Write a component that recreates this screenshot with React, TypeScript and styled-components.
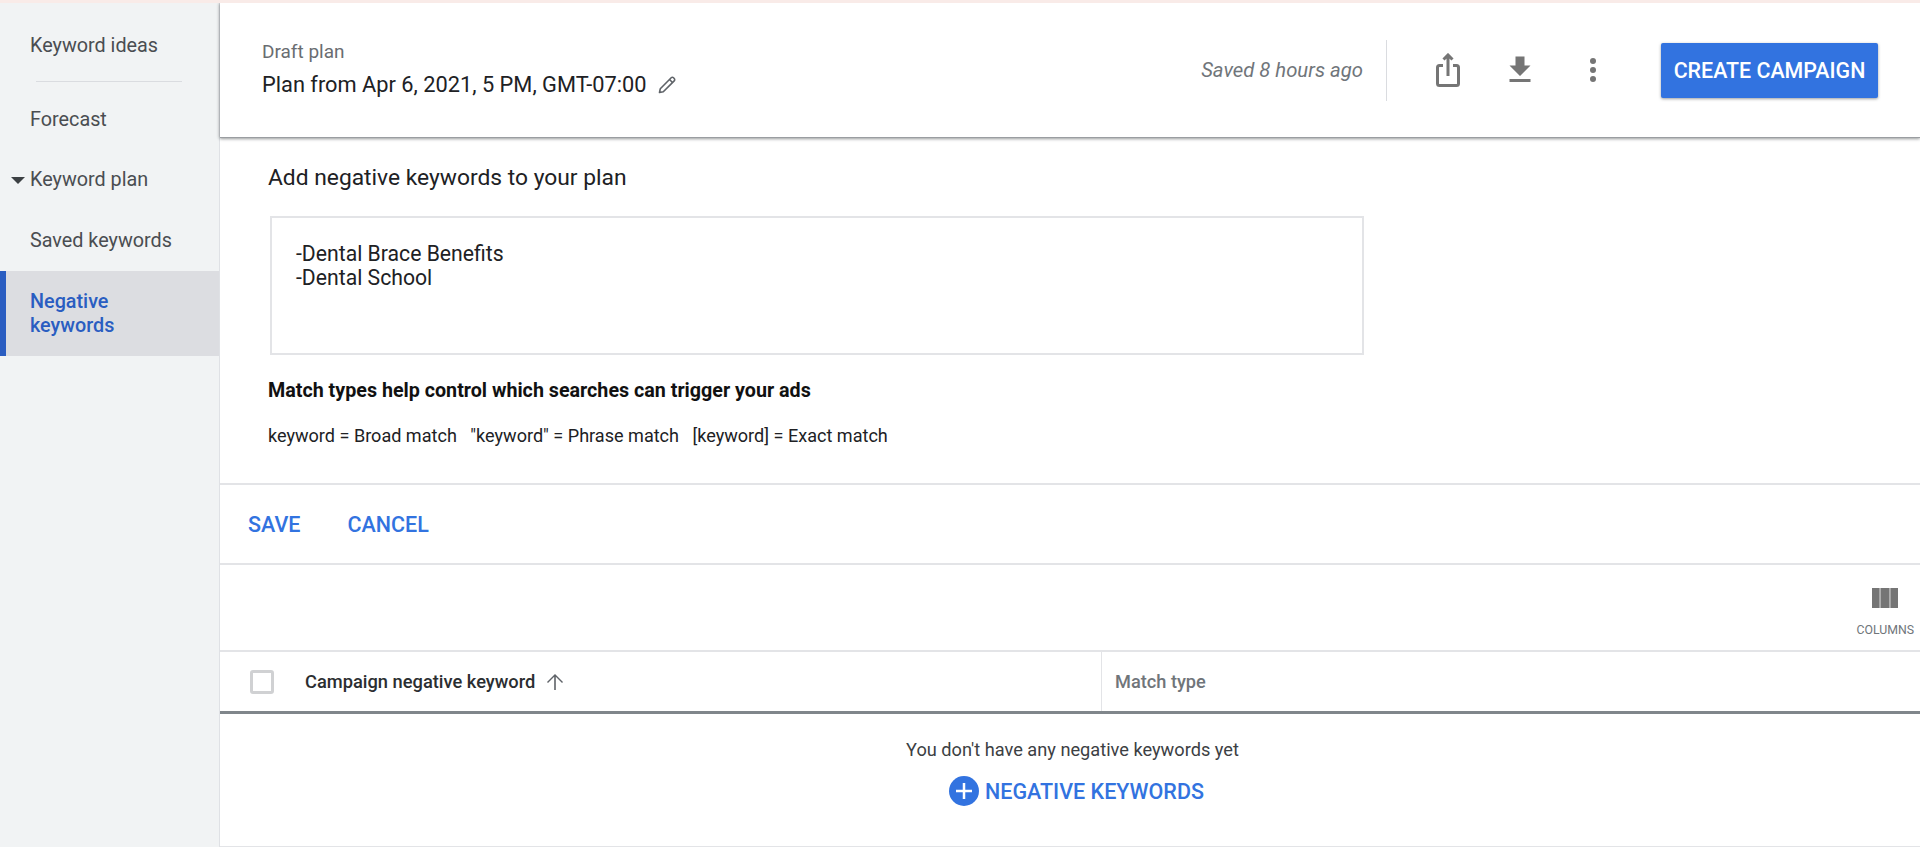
import React from "react";
import styled, { createGlobalStyle } from "styled-components";

const Global = createGlobalStyle`
  html, body { margin: 0; padding: 0; background: #fff; }
  body { font-family: Roboto, "Liberation Sans", sans-serif; overflow: hidden; }
  * { box-sizing: border-box; }
`;

const Page = styled.div`
  width: 1920px;
  height: 847px;
  display: flex;
  flex-direction: column;
  overflow: hidden;
`;
const TopStrip = styled.div`
  height: 3px;
  flex: none;
  background: #f9ebe8;
  position: relative;
  z-index: 2;
`;
const Body = styled.div`
  flex: 1;
  display: flex;
  min-height: 0;
`;
const Sidebar = styled.nav`
  width: 220px;
  flex: none;
  background: #f1f3f4;
  border-right: 1px solid #dfe1e5;
  padding-top: 25px;
`;
const NavItem = styled.div<{ $h: number; $mt?: number }>`
  height: ${(p) => p.$h}px;
  margin-top: ${(p) => p.$mt ?? 0}px;
  padding-left: 30px;
  display: flex;
  align-items: center;
  position: relative;
  font-size: 19.8px;
  line-height: 24px;
  color: #4a4d51;
`;
const ActiveItem = styled.div`
  height: 85px;
  padding: 19px 20px 0 24px;
  border-left: 6px solid #2a5dc1;
  background: #dcdde1;
  font-size: 19.8px;
  line-height: 24px;
  font-weight: 500;
  color: #2a5dc1;
`;
const Caret = styled.span`
  position: absolute;
  left: 11px;
  top: 50%;
  margin-top: -3px;
  width: 0;
  height: 0;
  border-left: 7px solid transparent;
  border-right: 7px solid transparent;
  border-top: 7px solid #3c4043;
`;
const NavDivider = styled.div`
  height: 1px;
  margin: 17px 37px 20px 36px;
  background: #dadce0;
`;
const Main = styled.main`
  flex: 1;
  min-width: 0;
  display: flex;
  flex-direction: column;
`;
const Header = styled.header`
  height: 135px;
  flex: none;
  background: #fff;
  display: flex;
  align-items: center;
  padding: 0 42px;
  border-bottom: 1px solid #9a9da1;
  box-shadow: 0 1px 3px rgba(60, 64, 67, 0.45), -1px 0 3px rgba(60, 64, 67, 0.2);
  position: relative;
  z-index: 1;
`;
const TitleBlock = styled.div`
  flex: 1;
  min-width: 0;
`;
const Eyebrow = styled.div`
  font-size: 19px;
  line-height: 20px;
  color: #6a6d71;
`;
const PlanRow = styled.div`
  margin-top: 10px;
  display: flex;
  align-items: center;
  gap: 8px;
  font-size: 21.8px;
  line-height: 26px;
  color: #202124;
`;
const Saved = styled.span`
  font-size: 20.3px;
  font-style: italic;
  color: #70757a;
`;
const VRule = styled.div`
  width: 1px;
  height: 61px;
  background: #dadce0;
  margin: 0 49px 0 23px;
`;
const IconSlot = styled.span<{ $mr: number }>`
  display: flex;
  align-items: center;
  margin-right: ${(p) => p.$mr}px;
`;
const Create = styled.div`
  width: 217px;
  height: 55px;
  background: #3273e0;
  border-radius: 2px;
  box-shadow: 0 1px 3px rgba(60, 64, 67, 0.5);
  color: #fff;
  font-size: 21.4px;
  font-weight: 500;
  display: flex;
  align-items: center;
  justify-content: center;
`;
const Editor = styled.section`
  height: 347px;
  flex: none;
  padding: 26px 49px 0 48px;
  border-bottom: 2px solid #e3e4e7;
`;
const EditorTitle = styled.div`
  font-size: 22.8px;
  line-height: 28px;
  color: #202124;
`;
const Box = styled.div`
  width: 1094px;
  height: 139px;
  margin: 24px 0 0 2px;
  padding: 24px 24px;
  border: 2px solid #e3e4e7;
  font-size: 21.2px;
  line-height: 24px;
  color: #202124;
`;
const Bold = styled.div`
  margin-top: 24px;
  font-size: 19.7px;
  line-height: 24px;
  font-weight: 700;
  color: #111;
`;
const Legend = styled.div`
  margin-top: 21px;
  font-size: 18.07px;
  line-height: 24px;
  color: #202124;
  white-space: pre;
`;
const Actions = styled.div`
  height: 80px;
  flex: none;
  display: flex;
  align-items: center;
  gap: 47px;
  padding-left: 28px;
  border-bottom: 2px solid #e3e4e7;
`;
const TextBtn = styled.span`
  font-size: 21.5px;
  font-weight: 500;
  color: #3273e0;
`;
const Tools = styled.div`
  height: 87px;
  flex: none;
  border-bottom: 2px solid #e3e4e7;
  display: flex;
  justify-content: flex-end;
  padding: 23px 6px 0 0;
`;
const ColumnsBtn = styled.div`
  display: flex;
  flex-direction: column;
  align-items: center;
  gap: 15px;
  font-size: 12.3px;
  line-height: 14px;
  color: #70757a;
`;
const TableHead = styled.div`
  height: 62px;
  flex: none;
  display: flex;
  border-bottom: 3px solid #80868b;
`;
const KeywordCol = styled.div`
  width: 882px;
  flex: none;
  display: flex;
  align-items: center;
  padding-left: 30px;
  border-right: 1px solid #e3e4e7;
`;
const Check = styled.span`
  width: 24px;
  height: 24px;
  border: 3px solid #d0d1d3;
  border-radius: 3px;
  margin-right: 31px;
`;
const ColLabel = styled.span`
  font-size: 18.3px;
  font-weight: 500;
  color: #2b2e31;
  margin-right: 8px;
`;
const TypeCol = styled.div`
  flex: 1;
  display: flex;
  align-items: center;
  padding-left: 13px;
  font-size: 18.2px;
  font-weight: 500;
  color: #70757a;
`;
const Empty = styled.div`
  flex: 1;
  display: flex;
  flex-direction: column;
  align-items: center;
  padding: 24px 0 0 5px;
  border-bottom: 1px solid #e3e4e7;
`;
const EmptyText = styled.div`
  font-size: 18.2px;
  line-height: 24px;
  color: #3c4043;
`;
const AddBtn = styled.div`
  margin: 14px 0 0 8px;
  display: flex;
  align-items: center;
  gap: 6px;
  font-size: 21.5px;
  font-weight: 500;
  color: #3273e0;
`;

export default function App() {
  return (
    <Page>
      <Global />
      <TopStrip />
      <Body>
        <Sidebar>
          <NavItem $h={36}>Keyword ideas</NavItem>
          <NavDivider />
          <NavItem $h={36}>Forecast</NavItem>
          <NavItem $h={60} $mt={12}>
            <Caret />
            Keyword plan
          </NavItem>
          <NavItem $h={61}>Saved keywords</NavItem>
          <ActiveItem>
            Negative
            <br />
            keywords
          </ActiveItem>
        </Sidebar>
        <Main>
          <Header>
            <TitleBlock>
              <Eyebrow>Draft plan</Eyebrow>
              <PlanRow>
                Plan from Apr 6, 2021, 5 PM, GMT-07:00
                <svg width="24" height="24" viewBox="0 0 24 24" fill="none" stroke="#5f6368" strokeWidth="1.6" strokeLinejoin="round">
                  <path d="M4.5 19.5l.8-3.8L16.2 4.8a1.6 1.6 0 0 1 2.3 0l.7.7a1.6 1.6 0 0 1 0 2.3L8.3 18.7z" />
                  <path d="M14.5 6.5l3 3" />
                </svg>
              </PlanRow>
            </TitleBlock>
            <Saved>Saved 8 hours ago</Saved>
            <VRule />
            <IconSlot $mr={42}>
              <svg width="24" height="34" viewBox="0 0 24 34" fill="none" stroke="#757575" strokeWidth="3">
                <path d="M7 12.5H3.5a2 2 0 0 0-2 2V30.5a2 2 0 0 0 2 2H20.5a2 2 0 0 0 2-2V14.5a2 2 0 0 0-2-2H17" />
                <path d="M12 3V23M7.5 6.5L12 2l4.5 4.5" />
              </svg>
            </IconSlot>
            <IconSlot $mr={51}>
              <svg width="36" height="36" viewBox="0 0 24 24" fill="#757575">
                <path d="M19 9h-4V3H9v6H5l7 7 7-7zM5 18v2h14v-2H5z" />
              </svg>
            </IconSlot>
            <IconSlot $mr={64}>
              <svg width="8" height="26" viewBox="0 0 8 26" fill="#757575">
                <circle cx="4" cy="4" r="3" />
                <circle cx="4" cy="13" r="3" />
                <circle cx="4" cy="22" r="3" />
              </svg>
            </IconSlot>
            <Create>CREATE CAMPAIGN</Create>
          </Header>
          <Editor>
            <EditorTitle>Add negative keywords to your plan</EditorTitle>
            <Box>
              -Dental Brace Benefits
              <br />
              -Dental School
            </Box>
            <Bold>Match types help control which searches can trigger your ads</Bold>
            <Legend>{'keyword = Broad match   "keyword" = Phrase match   [keyword] = Exact match'}</Legend>
          </Editor>
          <Actions>
            <TextBtn>SAVE</TextBtn>
            <TextBtn>CANCEL</TextBtn>
          </Actions>
          <Tools>
            <ColumnsBtn>
              <svg width="26" height="20" viewBox="4 5 17 13" preserveAspectRatio="none" fill="#757575">
                <path d="M9.5 18h6V5h-6v13zm-5.5 0h5V5H4v13zM16 5v13h5V5h-5z" />
              </svg>
              COLUMNS
            </ColumnsBtn>
          </Tools>
          <TableHead>
            <KeywordCol>
              <Check />
              <ColLabel>Campaign negative keyword</ColLabel>
              <svg width="24" height="24" viewBox="0 0 24 24" fill="#5f6368">
                <path d="M4 12l1 1 6.2-6.2V20h1.6V6.8L19 13l1-1-8-8-8 8z" />
              </svg>
            </KeywordCol>
            <TypeCol>Match type</TypeCol>
          </TableHead>
          <Empty>
            <EmptyText>You don't have any negative keywords yet</EmptyText>
            <AddBtn>
              <svg width="30" height="30" viewBox="0 0 30 30">
                <circle cx="15" cy="15" r="15" fill="#3273e0" />
                <path d="M13.75 7h2.5v6.75H23v2.5h-6.75V23h-2.5v-6.75H7v-2.5h6.75z" fill="#fff" />
              </svg>
              NEGATIVE KEYWORDS
            </AddBtn>
          </Empty>
        </Main>
      </Body>
    </Page>
  );
}
